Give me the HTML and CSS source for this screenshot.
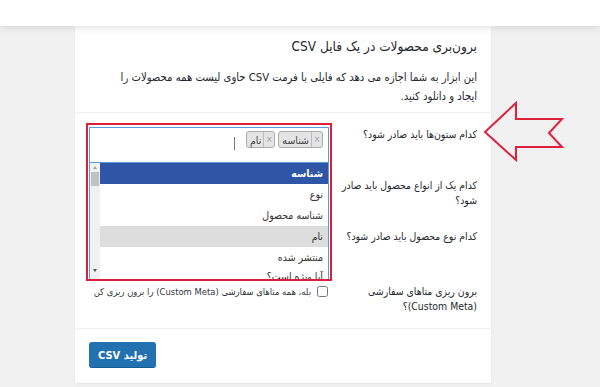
FILE: index.html
```html
<!DOCTYPE html>
<html lang="fa">
<head>
    <meta charset="UTF-8">
    <meta name="viewport" content="width=device-width, initial-scale=1.0">
    <title>برون‌بری محصولات</title>
    <link rel="stylesheet" href="styles.css">
</head>
<body>
    <div class="topbar"></div>

    <div class="page">
        <section class="card" dir="rtl">
            <div class="card-head">
                <h2>برون‌بری محصولات در یک فایل CSV</h2>
                <p>این ابزار به شما اجازه می دهد که فایلی با فرمت CSV حاوی لیست همه محصولات را ایجاد و دانلود کنید.</p>
            </div>

            <div class="form">
                <div class="label r1">کدام ستون‌ها باید صادر شود؟</div>
                <div class="annot">
                    <div class="s2">
                        <div class="choices">
                            <span class="tag"><span class="x">×</span>شناسه</span>
                            <span class="tag"><span class="x">×</span>نام</span>
                            <span class="caret"></span>
                        </div>
                        <div class="drop">
                            <ul class="list">
                                <li class="hl">شناسه</li>
                                <li>نوع</li>
                                <li>شناسه محصول</li>
                                <li class="sel">نام</li>
                                <li>منتشر شده</li>
                                <li>آیا ویژه است؟</li>
                            </ul>
                            <div class="sbar">
                                <span class="up"></span>
                                <span class="thumb"></span>
                                <span class="down"></span>
                            </div>
                        </div>
                    </div>
                </div>
                <div class="label r2">کدام یک از انواع محصول باید صادر شود؟</div>
                <div class="label r3">کدام نوع محصول باید صادر شود؟</div>
                <div class="label r4">برون ریزی متاهای سفارشی (Custom Meta)؟</div>
                <label class="check">
                    <input type="checkbox">
                    <span>بله، همه متاهای سفارشی (Custom Meta) را برون ریزی کن</span>
                </label>
            </div>

            <div class="card-foot">
                <button class="btn">تولید CSV</button>
            </div>
        </section>

        <svg class="arrow" width="82" height="62" viewBox="0 0 82 62">
            <polygon points="2,31 33,2 33,18 79,18 66,32 79,46 33,46 33,59" fill="none" stroke="#e0213d" stroke-width="2"/>
        </svg>
    </div>
</body>
</html>
```

FILE: styles.css
```css
body {
    margin: 0;
    background: #f1f1f1;
    font-family: "DejaVu Sans Condensed", "DejaVu Sans", sans-serif;
    color: #32373c;
}
.topbar {
    height: 26px;
    background: #fff;
    box-shadow: 0 1px 8px rgba(0, 0, 0, 0.13);
    position: relative;
    z-index: 1;
}
.page {
    position: relative;
    height: 361px;
}
.card {
    margin-left: 75px;
    width: 416px;
    background: #fff;
    box-shadow: 0 1px 2px rgba(0, 0, 0, 0.06);
}
.card-head {
    padding: 10px 14px 6px;
    border-bottom: 1px solid #f0f0f0;
}
.card-head h2 {
    margin: 0;
    font-size: 13.5px;
    line-height: 20px;
    font-weight: normal;
    color: #23282d;
}
.card-head p {
    margin: 12px 0 0;
    font-size: 11.2px;
    line-height: 19px;
    max-width: 370px;
    color: #23282d;
}
.form {
    display: grid;
    grid-template-columns: 137px 1fr;
    grid-template-rows: 51px 51px 66px auto;
    column-gap: 12px;
    padding: 0 14px;
}
.label {
    grid-column: 1;
    font-size: 10.4px;
    line-height: 15px;
    color: #23282d;
    padding-top: 14px;
}
.label.r4 {
    padding-top: 3px;
    padding-bottom: 14px;
}
.annot {
    grid-column: 2;
    grid-row: 1 / 4;
    margin: 10px -4px 0 -3px;
    height: 158px;
    box-sizing: border-box;
    border: 2px solid #dc1f3d;
    padding: 2px 1px 0 1px;
    overflow: hidden;
}
.s2 {
    border: 1px solid #5b9dd9;
    border-bottom: none;
    height: 100%;
    box-sizing: border-box;
}
.choices {
    height: 34px;
    display: flex;
    align-items: flex-start;
    gap: 3px;
    padding: 3px 5px 0;
    box-sizing: border-box;
}
.tag {
    display: flex;
    align-items: center;
    height: 15px;
    background: #e4e4e4;
    border: 1px solid #aaa;
    border-radius: 3px;
    font-size: 10.5px;
    color: #444;
    padding-left: 3px;
}
.tag .x {
    font-size: 8px;
    color: #999;
    padding: 0 2px;
    margin-left: 2px;
    border-left: 1px solid #bbb;
    line-height: 15px;
}
.caret {
    width: 1px;
    height: 13px;
    background: #777;
    margin: 6px 8px 0 0;
}
.drop {
    display: flex;
    border-top: 1px solid #5b9dd9;
    height: 130px;
}
.list {
    flex: 1;
    list-style: none;
    margin: 0;
    padding: 0;
}
.list li {
    height: 21px;
    line-height: 21px;
    font-size: 10.5px;
    color: #333;
    padding-right: 5px;
}
.list li.hl {
    background: #2f56a6;
    color: #fff;
    font-weight: bold;
}
.list li.sel {
    background: #ddd;
}
.list li:last-child {
    line-height: 17px;
}
.sbar {
    width: 10px;
    background: #f1f1f1;
    display: flex;
    flex-direction: column;
    align-items: center;
    padding-top: 3px;
}
.sbar .up,
.sbar .down {
    width: 0;
    height: 0;
    border-left: 2px solid transparent;
    border-right: 2px solid transparent;
}
.sbar .up {
    border-bottom: 3px solid #a3a3a3;
}
.sbar .down {
    border-top: 3px solid #505050;
    margin-top: 83px;
}
.sbar .thumb {
    width: 8px;
    height: 14px;
    background: #c1c1c1;
    margin-top: 3px;
}
.check {
    grid-column: 2;
    grid-row: 4;
    display: flex;
    align-items: flex-start;
    gap: 6px;
    font-size: 9.4px;
    line-height: 15px;
    color: #32373c;
    padding-top: 3px;
    white-space: nowrap;
}
.check input {
    margin: 2px 0 0 0;
    width: 11px;
    height: 11px;
}
.card-foot {
    border-top: 1px solid #f0f0f0;
    padding: 13px 14px 15px;
    text-align: left;
}
.btn {
    font-family: "DejaVu Sans Condensed", "DejaVu Sans", sans-serif;
    font-size: 11px;
    font-weight: bold;
    height: 26px;
    padding: 0 8px;
    color: #fff;
    background: #2271b1;
    border: 1px solid #2271b1;
    border-bottom-color: #135e96;
    border-radius: 3px;
}
.arrow {
    position: absolute;
    left: 483px;
    top: 75px;
}
```
